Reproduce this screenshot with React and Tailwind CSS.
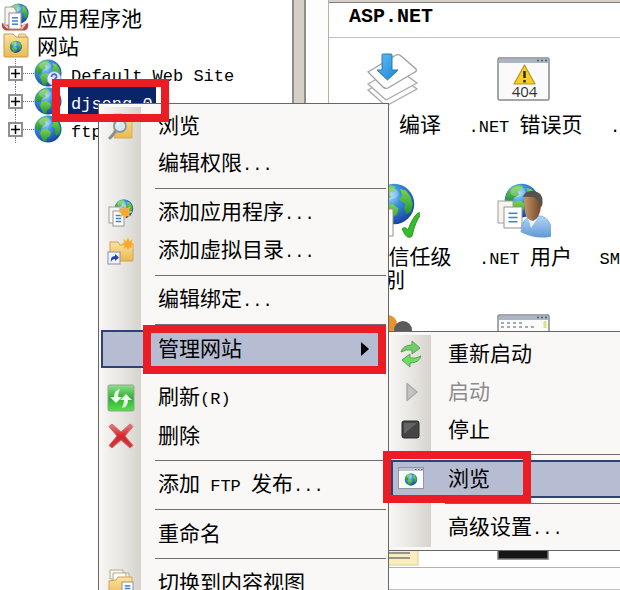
import React from 'react';

const CJK = 'font-["Noto_Sans_CJK_SC",sans-serif]';
const MONO = 'font-["Liberation_Mono",monospace]';

// Chinese runs use the full-width face, everything else the half-width one
const Label = ({ text }) => (
  <span className={`${CJK} text-[21px] leading-[21px] whitespace-pre`}>
    {text.split(/([\u4e00-\u9fff]+)/).filter(Boolean).map((part, idx) =>
      /[\u4e00-\u9fff]/.test(part) ? (
        <React.Fragment key={idx}>{part}</React.Fragment>
      ) : (
        <span key={idx} className={`${MONO} text-[17px] leading-none`}>{part}</span>
      )
    )}
  </span>
);

/* ---------- Icons ---------- */

const IconDefs = () => (
  <svg className="absolute w-0 h-0" aria-hidden="true">
    <defs>
      <radialGradient id="sea" cx="0.38" cy="0.3" r="0.75">
        <stop offset="0" stopColor="#a5dcfb" />
        <stop offset="0.4" stopColor="#3a8fdc" />
        <stop offset="1" stopColor="#143f9c" />
      </radialGradient>
      <linearGradient id="land" x1="0" y1="0" x2="0" y2="1">
        <stop offset="0" stopColor="#7bd64a" />
        <stop offset="1" stopColor="#23903a" />
      </linearGradient>
      <linearGradient id="folder" x1="0" y1="0" x2="0" y2="1">
        <stop offset="0" stopColor="#fbe3a0" />
        <stop offset="1" stopColor="#e9b94f" />
      </linearGradient>
      <linearGradient id="green" x1="0" y1="0" x2="0" y2="1">
        <stop offset="0" stopColor="#8fe08a" />
        <stop offset="0.5" stopColor="#2fae35" />
        <stop offset="1" stopColor="#57e04c" />
      </linearGradient>
      <linearGradient id="shirt" x1="0" y1="0" x2="0" y2="1">
        <stop offset="0" stopColor="#b4d6f5" />
        <stop offset="1" stopColor="#5f98d6" />
      </linearGradient>
      <linearGradient id="skin" x1="0" y1="0" x2="1" y2="0">
        <stop offset="0" stopColor="#c99468" />
        <stop offset="1" stopColor="#6d4527" />
      </linearGradient>
      <linearGradient id="red" x1="0" y1="0" x2="0" y2="1">
        <stop offset="0" stopColor="#e87f7f" />
        <stop offset="0.5" stopColor="#d8252b" />
        <stop offset="1" stopColor="#d23a3f" />
      </linearGradient>
      <linearGradient id="arrow" x1="0" y1="0" x2="1" y2="1">
        <stop offset="0" stopColor="#5cc0f4" />
        <stop offset="1" stopColor="#1c83d2" />
      </linearGradient>
    </defs>
  </svg>
);

// drawn in a 28 unit box, placed with x / y / scale inside bigger icons
const GlobeShape = ({ x = 0, y = 0, scale = 1 }) => (
  <g transform={`translate(${x} ${y}) scale(${scale})`}>
    <circle cx="14" cy="14" r="13.500" fill="url(#sea)" />
    <path d="M2 9C4 5 8 2 12 1.500l3 1-1 3-3 1 1 3-4 2-1 3-3 1-2-2z" fill="url(#land)" />
    <path d="M8 15l5-1 4 3-1 4-3 2-1 4-3-1-2-5-1-3z" fill="url(#land)" />
    <path d="M18 4l4 1 3 4 1.500 5-1 5-3 2-2-4 1-3-4-3 2-3z" fill="url(#land)" />
    <ellipse cx="11" cy="7" rx="6" ry="4" fill="#fff" opacity="0.25" />
  </g>
);

const PageShape = ({ x, y, w, h }) => (
  <g>
    <rect x={x} y={y} width={w} height={h} fill="#fdfdfd" stroke="#9a9389" />
    {[0.3, 0.5, 0.7].map((f) => (
      <path key={f} d={`M${x + w * 0.25} ${y + h * f}h${w * 0.5}`} stroke="#3f7fd0" strokeWidth="1.5" />
    ))}
  </g>
);

const StarShape = ({ x, y }) => (
  <path
    transform={`translate(${x} ${y})`}
    d="M0-7l1.500 4L5-5 3.500-1.500 7 0 3.500 1.500 5 5 1.500 3.500 0 7-1.500 3.500-5 5-3.500 1.500-7 0-3.500-1.500-5-5-1.500-3z"
    fill="#f6a92f"
    stroke="#fbd27b"
    strokeWidth="0.6"
  />
);

const GlobeIcon = ({ unknown }) => (
  <svg viewBox="0 0 28 28" className="w-7 h-7 shrink-0">
    <GlobeShape />
    {unknown && (
      <g>
        <circle cx="20" cy="19.500" r="7" fill="#e6ecfb" stroke="#8fa3dc" />
        <path d="M17.500 18c0-4 5.500-3.500 5 0-.3 1.500-2.300 1.500-2.300 3.500M20.200 23v1.500" fill="none" stroke="#4a63c4" strokeWidth="1.800" />
      </g>
    )}
  </svg>
);

const PoolIcon = () => (
  <svg viewBox="0 0 28 28" className="w-7 h-7 shrink-0">
    <GlobeShape x={7} y={0} scale={0.75} />
    <path d="M1 20q-1 6 4 7.500h19q4-1.500 3-7.500l-5 2H6z" fill="#b8473f" />
    <path d="M3 21l4 4M24 21l-4 5" stroke="#f0c4be" strokeWidth="2.200" />
    <path d="M4 4h8l3 3v15H4z" fill="#f5f5f5" stroke="#a39d95" />
    <PageShape x={8} y={10} w={12} h={16} />
  </svg>
);

const SitesIcon = () => (
  <svg viewBox="0 0 28 28" className="w-7 h-7 shrink-0">
    <path d="M3 3h9l3 3h11q1 0 1 1v18q0 1-1 1H4q-1 0-1-1z" fill="url(#folder)" stroke="#c99b4a" />
    <path d="M18 3h6l2 3h-9z" fill="#f4dcae" stroke="#c99b4a" strokeWidth="0.8" />
    <GlobeShape x={8.500} y={9.500} scale={0.45} />
  </svg>
);

const SearchFolderIcon = () => (
  <svg viewBox="0 0 28 28" className="w-7 h-7">
    <path d="M7 2h8l2 2h8v22H7z" fill="url(#folder)" stroke="#d9ae55" />
    <path d="M3 26l6-7" stroke="#8a8f96" strokeWidth="3" strokeLinecap="round" />
    <circle cx="13" cy="14" r="6" fill="#d5e9f6" stroke="#8d98a3" strokeWidth="1.800" />
    <path d="M10 13q1-3 4-3" fill="none" stroke="#fff" strokeWidth="1.500" />
  </svg>
);

const AddAppIcon = () => (
  <svg viewBox="0 0 28 28" className="w-7 h-7">
    <GlobeShape x={7} y={0} scale={0.7} />
    <rect x="2" y="8" width="11" height="16" fill="#f6f6f4" stroke="#a39d95" />
    <PageShape x={6} y={12} w={11} h={15} />
    <StarShape x={18} y={13} />
  </svg>
);

const AddDirIcon = () => (
  <svg viewBox="0 0 28 28" className="w-7 h-7">
    <path d="M3 5h8l2 3h13v16H3z" fill="url(#folder)" stroke="#d0a34c" />
    <StarShape x={21} y={7} />
    <rect x="1" y="15" width="12" height="12" fill="#eef2fb" stroke="#8b8fa5" />
    <path d="M4 25q-1-6 4-6v-2l4 3.500-4 3.500v-2q-3 0-4 3z" fill="#2b3fae" />
  </svg>
);

const RefreshIcon = () => (
  <svg viewBox="0 0 28 28" className="w-7 h-7">
    <rect x="1" y="1" width="26" height="26" rx="1.500" fill="url(#green)" stroke="#8fa58c" />
    <path d="M13 5q-6 1-6 8H3l6 6 6-6h-4q0-4 2-8z" fill="#eafbe6" />
    <path d="M15 23q6-1 6-8h4l-6-6-6 6h4q0 4-2 8z" fill="#eafbe6" transform="translate(0 1)" />
  </svg>
);

const DeleteIcon = () => (
  <svg viewBox="0 0 28 28" className="w-7 h-7">
    <path d="M5 2l9 8 9-8 3 2.500-8 9.500 8 9.500L23 26l-9-8-9 8-3-2.500 8-9.500-8-9.500z" fill="url(#red)" stroke="#cf6a6a" strokeLinejoin="round" />
  </svg>
);

const ContentViewIcon = () => (
  <svg viewBox="0 0 28 28" className="w-7 h-7">
    <path d="M3 1h13v3h6v6H3z" fill="#fbf8ea" stroke="#b5ab8d" />
    <path d="M6 4h13v8H6z" fill="#fff" stroke="#b5ab8d" />
    <path d="M2 12l7-1 2-3h14v20H2z" fill="url(#folder)" stroke="#cfa558" />
    <PageShape x={15} y={13} w={11} h={13} />
  </svg>
);

const RestartIcon = () => (
  <svg viewBox="0 0 28 28" className="w-7 h-7">
    <path d="M4 12q2-7 11-7V1l8 7-8 6v-4q-6-1-11 2z" fill="#6fcf68" stroke="#56a152" />
    <path d="M24 16q-2 7-11 7v4l-8-7 8-6v4q6 1 11-2z" fill="#6fdc62" stroke="#56a152" />
  </svg>
);

const StartIcon = () => (
  <svg viewBox="0 0 28 28" className="w-7 h-7">
    <path d="M10 5.500l10 8.500-10 8.500z" fill="#c2c2c2" stroke="#a9a9a9" strokeWidth="1.500" strokeLinejoin="round" />
  </svg>
);

const StopIcon = () => (
  <svg viewBox="0 0 28 28" className="w-7 h-7">
    <rect x="5" y="5" width="17" height="17" rx="2" fill="#454545" stroke="#2a2a2a" />
    <path d="M7 7h13L7 18z" fill="#646464" />
  </svg>
);

const BrowseIcon = () => (
  <svg viewBox="0 0 28 28" className="w-7 h-7">
    <rect x="1.500" y="2.500" width="25" height="21" fill="#fbfcfd" stroke="#8f96a5" />
    <rect x="2" y="3" width="24" height="3" fill="#bac4d3" />
    <path d="M18 4.500h1.500M21 4.500h1.500M24 4.500h1.500" stroke="#5c6474" />
    <GlobeShape x={7.500} y={8} scale={0.46} />
  </svg>
);

const CompileIcon = () => (
  <svg viewBox="0 0 56 56" className="w-14 h-14">
    {[39, 33].map((y) => (
      <path key={y} d={`M4 ${y}l28-16 21 15-31 17z`} fill="#fdfdfd" stroke="#a9a9a9" strokeWidth="1.300" />
    ))}
    <path d="M4 21L32 4q3-1 5 1l15 13q1 2-1 3L24 37q-3 1-5-1z" fill="#fff" stroke="#9d9d9d" strokeWidth="1.300" />
    <path d="M18 4q0-1 1-1h8q1 0 1 1v15h6L23.500 29 13 19h5z" fill="url(#arrow)" stroke="#2b7ab8" />
  </svg>
);

const WindowFrame = ({ children }) => (
  <svg viewBox="0 0 56 56" className="w-14 h-14">
    <rect x="3" y="7" width="51" height="42" rx="1.500" fill="#fafafa" stroke="#85898f" strokeWidth="1.500" />
    <rect x="4" y="8" width="49" height="4" fill="#aab6c3" />
    <path d="M42 9.500h2M46 9.500h2M50 9.500h2" stroke="#525a64" strokeWidth="1.500" />
    {children}
  </svg>
);

const ErrorPagesIcon = () => (
  <WindowFrame>
    <path d="M29.500 14L40 33H19z" fill="#f8cf1c" stroke="#b8912a" strokeWidth="1.200" strokeLinejoin="round" />
    <path d="M29.500 20v7M29.500 29v2.500" stroke="#222" strokeWidth="2.400" />
    <text x="29.500" y="46" textAnchor="middle" fontFamily="Open Sans, sans-serif" fontSize="15" fill="#333">404</text>
  </WindowFrame>
);

const TrustIcon = () => (
  <svg viewBox="0 0 56 56" className="w-14 h-14">
    <GlobeShape x={9} y={0} scale={1.5} />
    <PageShape x={10} y={26} w={19} h={27} />
    <path d="M38 46q3-3 6 1 4-12 10-17 4-1 3 1-6 8-9 22-1 2-4 1-2 0-6-8z" fill="#35bd2a" stroke="#2b9a26" />
  </svg>
);

const UsersIcon = () => (
  <svg viewBox="0 0 56 56" className="w-14 h-14">
    <GlobeShape x={9} y={0} scale={1.25} />
    <rect x="3" y="18" width="15" height="22" fill="#f7f4ee" stroke="#a39d95" />
    <PageShape x={9} y={24} w={18} h={21} />
    <path d="M26 49q0-13 10-16h11q10 4 11 20-16 4-32-4z" fill="url(#shirt)" stroke="#6d9bcb" strokeWidth="0.600" />
    <path d="M33 35l3 10 6-9z" fill="#eaf3fc" />
    <path d="M29 16q2-7 10-6 9 2 7 13-1 12-8 15-7-1-8-9z" fill="url(#skin)" />
    <path d="M28 14q2-7 10-6 12 1 9 16l-4-6q-1-5-15-4z" fill="#56524e" />
  </svg>
);

const RolesIcon = () => (
  <svg viewBox="0 0 56 56" className="w-14 h-14">
    <circle cx="24" cy="16" r="9" fill="#e8932e" />
    <circle cx="39" cy="22" r="9" fill="#5b5b5b" />
  </svg>
);

const ControlsIcon = () => (
  <WindowFrame>
    <path d="M6 15h24M6 19h34" stroke="#8a8f94" strokeWidth="1.500" strokeDasharray="3 3" />
    <path d="M50 13v7" stroke="#dde47a" strokeWidth="3" />
  </WindowFrame>
);

const ListIcon = () => (
  <svg viewBox="0 0 56 56" className="w-14 h-14">
    <rect x="4" y="8" width="50" height="47" fill="#fbeebd" stroke="#d8cc98" />
    <path d="M12 43h34M12 48h34" stroke="#777" strokeWidth="1.500" />
  </svg>
);

const ScreenIcon = () => (
  <svg viewBox="0 0 56 56" className="w-14 h-14">
    <rect x="3" y="8" width="50" height="41" fill="#161616" stroke="#777" strokeWidth="1.500" />
  </svg>
);

/* ---------- Tree ---------- */

const sites = [
  { name: 'Default Web Site', unknown: true },
  { name: 'djsong_0', selected: true },
  { name: 'ftp' },
];

const Expander = () => (
  <button type="button" aria-label="+" className="w-[15px] h-[15px] shrink-0 border-2 border-[#909090] bg-white flex items-center justify-center">
    <svg viewBox="0 0 9 9" className="w-[9px] h-[9px]">
      <path d="M0 4.500h9M4.500 0v9" stroke="#000" strokeWidth="1.500" />
    </svg>
  </button>
);

const SiteTree = () => (
  <nav className="w-[292px] shrink-0 bg-white pt-[3px] overflow-hidden">
    <div className="flex items-center h-7 pl-px gap-2">
      <PoolIcon />
      <Label text="应用程序池" />
    </div>
    <div className="flex items-center h-7 pl-px gap-2">
      <SitesIcon />
      <Label text="网站" />
    </div>
    <ul>
      {sites.map((site) => (
        <li key={site.name} className="flex items-center h-7 pl-2">
          <div className="flex flex-col items-center h-7 shrink-0">
            <div className="flex-1 border-l border-dotted border-gray-500" />
            <Expander />
            <div className="flex-1 border-l border-dotted border-gray-500" />
          </div>
          <div className="w-[11px] shrink-0 border-t border-dotted border-gray-500" />
          <GlobeIcon unknown={site.unknown} />
          <span
            className={`ml-1.5 px-[3px] h-7 flex items-center ${
              site.selected ? 'bg-[#0a246a] text-white' : ''
            }`}
          >
            <Label text={site.name} />
          </span>
        </li>
      ))}
    </ul>
  </nav>
);

/* ---------- Feature view ---------- */

const features = [
  { icon: <CompileIcon />, label: '.NET 编译' },
  { icon: <ErrorPagesIcon />, label: '.NET 错误页' },
  { icon: null, label: '.NET 角色' },
  { icon: <TrustIcon />, label: '.NET 信任级别' },
  { icon: <UsersIcon />, label: '.NET 用户' },
  { icon: null, label: 'SMTP 电子邮件' },
  { icon: <RolesIcon /> },
  { icon: <ControlsIcon /> },
  { icon: null },
];

const FeatureCell = ({ icon, label }) => (
  <div className="flex flex-col items-center">
    <div className="h-14 pr-1.5">{icon}</div>
    {label && (
      <div className={`${CJK} w-[120px] mt-1.5 text-center text-[21px] leading-[21px] break-all`}>
        <span className={`${MONO} text-[17px] leading-none`}>{label.split(' ')[0]} </span>
        {label.split(' ')[1]}
      </div>
    )}
  </div>
);

const FeatureView = () => (
  <div className="flex-1 min-w-0 pl-[22px] bg-[#fdfdfd]">
    <section className="h-[568px] overflow-hidden bg-white border-l border-b border-[#b5b2aa]">
      <div className="h-[3px] bg-[#d4d0c8] border-b border-[#808080]" />
      <h2 className={`${MONO} h-[35px] pl-5 pt-0.5 text-[20px] leading-6 font-bold border-b border-[#a9c4e6]`}>
        ASP.NET
      </h2>
      <div className="grid grid-cols-[repeat(3,131px)] grid-rows-[132px_125px_132px] pt-[13px]">
        {features.map((feature, idx) => (
          <FeatureCell key={idx} {...feature} />
        ))}
      </div>
      <div className="grid grid-cols-[repeat(3,131px)] pt-[70px]">
        <FeatureCell icon={<ListIcon />} />
        <FeatureCell icon={<ScreenIcon />} />
      </div>
    </section>
    <div className="h-[22px] border-b border-[#c4c1ba]" />
  </div>
);

/* ---------- Menus ---------- */

const siteMenu = [
  { label: '浏览', icon: <SearchFolderIcon /> },
  { label: '编辑权限...' },
  null,
  { label: '添加应用程序...', icon: <AddAppIcon /> },
  { label: '添加虚拟目录...', icon: <AddDirIcon /> },
  null,
  { label: '编辑绑定...' },
  null,
  { label: '管理网站', active: true, submenu: true },
  null,
  { label: '刷新(R)', icon: <RefreshIcon /> },
  { label: '删除', icon: <DeleteIcon /> },
  null,
  { label: '添加 FTP 发布...' },
  null,
  { label: '重命名' },
  null,
  { label: '切换到内容视图', icon: <ContentViewIcon /> },
];

const manageMenu = [
  { label: '重新启动', icon: <RestartIcon /> },
  { label: '启动', icon: <StartIcon />, disabled: true },
  { label: '停止', icon: <StopIcon /> },
  null,
  { label: '浏览', icon: <BrowseIcon />, active: true },
  null,
  { label: '高级设置...' },
];

const GUTTER = 'bg-linear-to-r from-[#f6f5f3] via-[#e9e7e3] to-[#d6d3cd]';

const MenuItem = ({ item }) => (
  <button
    type="button"
    role="menuitem"
    disabled={item.disabled}
    className={`flex w-full h-[38px] items-center text-left ${
      item.active ? 'bg-[#b6bdd2] outline-2 -outline-offset-2 outline-[#2c4377]' : ''
    } ${item.disabled ? 'text-[#8c8c8c]' : 'text-black'}`}
  >
    <span className={`w-10 h-full shrink-0 flex items-center justify-center ${item.active ? '' : GUTTER}`}>
      {item.icon}
    </span>
    <span className="flex-1 pl-[17px] pb-1 flex items-center">
      <Label text={item.label} />
    </span>
    {item.submenu && (
      <svg viewBox="0 0 8 14" className="w-2 h-3.5 mr-[17px]">
        <path d="M0 0l8 7-8 7z" fill="#000" />
      </svg>
    )}
  </button>
);

const Menu = ({ items, className }) => (
  <div role="menu" className={`absolute bg-[#f9f8f7] border border-[#666] py-[3px] px-0.5 ${className}`}>
    {items.map((item, idx) =>
      item ? (
        <MenuItem key={idx} item={item} />
      ) : (
        <div key={idx} role="separator" className="flex items-center h-[11px]">
          <div className={`w-10 h-full ${GUTTER}`} />
          <div className="flex-1 ml-3.5 h-px bg-[#6f6f6f]" />
        </div>
      )
    )}
  </div>
);

const Marker = ({ className }) => (
  <div className={`absolute pointer-events-none border-[#ec1c24] ${className}`} />
);

const App = () => (
  <div className="relative flex h-screen overflow-hidden bg-white text-black">
    <IconDefs />
    <SiteTree />
    <div className="w-3.5 shrink-0 bg-[#d4d0c8] border-x-2 border-[#8f8d88]" />
    <FeatureView />

    <Menu items={siteMenu} className="left-[98px] top-[103px] w-[291px]" />
    <Menu items={manageMenu} className="left-[388px] top-[331px] w-[291px]" />

    {/* Highlighted steps */}
    <Marker className="left-[52px] top-[79px] w-[117px] h-[43px] border-8" />
    <Marker className="left-[143px] top-[325px] w-[243px] h-[49px] border-8" />
    <Marker className="left-[383px] top-[451px] w-[148px] h-[52px] border-8" />
  </div>
);

export default App;
